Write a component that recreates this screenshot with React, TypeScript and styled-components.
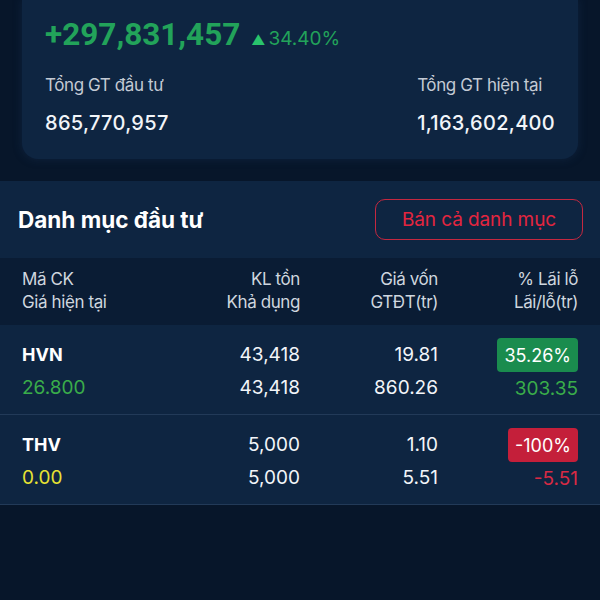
import styled, { createGlobalStyle } from 'styled-components';

const GlobalStyle = createGlobalStyle`
  html, body {
    margin: 0;
    padding: 0;
    background: #07162a;
  }
  body {
    font-family: Inter, 'Noto Sans', sans-serif;
    color: #e8eef6;
    -webkit-font-smoothing: antialiased;
  }
`;

interface Holding {
  code: string;
  price: string;
  priceTone: 'up' | 'flat';
  volume: string;
  available: string;
  cost: string;
  invested: string;
  percent: string;
  profit: string;
  tone: 'up' | 'down';
}

const holdings: Holding[] = [
  {
    code: 'HVN',
    price: '26.800',
    priceTone: 'up',
    volume: '43,418',
    available: '43,418',
    cost: '19.81',
    invested: '860.26',
    percent: '35.26%',
    profit: '303.35',
    tone: 'up',
  },
  {
    code: 'THV',
    price: '0.00',
    priceTone: 'flat',
    volume: '5,000',
    available: '5,000',
    cost: '1.10',
    invested: '5.51',
    percent: '-100%',
    profit: '-5.51',
    tone: 'down',
  },
];

export default function App() {
  return (
    <Page>
      <GlobalStyle />
      <SummaryWrap>
        <SummaryCard>
          <ProfitLine>
            <Profit>+297,831,457</Profit>
            <Change>
              <Arrow>▲</Arrow>34.40%
            </Change>
          </ProfitLine>
          <Totals>
            <TotalBlock>
              <TotalLabel>Tổng GT đầu tư</TotalLabel>
              <TotalValue>865,770,957</TotalValue>
            </TotalBlock>
            <TotalBlock>
              <TotalLabel>Tổng GT hiện tại</TotalLabel>
              <TotalValue>1,163,602,400</TotalValue>
            </TotalBlock>
          </Totals>
        </SummaryCard>
      </SummaryWrap>

      <Section>
        <SectionHeader>
          <Title>Danh mục đầu tư</Title>
          <SellAll>Bán cả danh mục</SellAll>
        </SectionHeader>

        <HeadRow>
          <HeadCell>
            <span>Mã CK</span>
            <span>Giá hiện tại</span>
          </HeadCell>
          <HeadCell $right>
            <span>KL tồn</span>
            <span>Khả dụng</span>
          </HeadCell>
          <HeadCell $right>
            <span>Giá vốn</span>
            <span>GTĐT(tr)</span>
          </HeadCell>
          <HeadCell $right>
            <span>% Lãi lỗ</span>
            <span>Lãi/lỗ(tr)</span>
          </HeadCell>
        </HeadRow>

        {holdings.map((h) => (
          <Row key={h.code}>
            <Cell>
              <Code>{h.code}</Code>
              <Value $tone={h.priceTone}>{h.price}</Value>
            </Cell>
            <Cell $right>
              <Value>{h.volume}</Value>
              <Value>{h.available}</Value>
            </Cell>
            <Cell $right>
              <Value>{h.cost}</Value>
              <Value>{h.invested}</Value>
            </Cell>
            <Cell $right>
              <Badge $tone={h.tone}>{h.percent}</Badge>
              <Value $tone={h.tone}>{h.profit}</Value>
            </Cell>
          </Row>
        ))}
      </Section>
    </Page>
  );
}

const toneColor = {
  up: '#3aad4a',
  flat: '#e6e233',
  down: '#d82a44',
};

const Page = styled.div`
  min-height: 600px;
  background: #07162a;
`;

const SummaryWrap = styled.div`
  padding: 0 22px 22px;
`;

const SummaryCard = styled.div`
  background: #0e2541;
  border-radius: 0 0 16px 16px;
  padding: 14px 23px 22px;
  box-shadow: 0 0 10px rgba(30, 60, 100, 0.35);
`;

const ProfitLine = styled.div`
  display: flex;
  align-items: baseline;
  gap: 11px;
  height: 42px;
`;

const Profit = styled.span`
  font-family: Roboto, 'Liberation Sans', sans-serif;
  font-size: 31.5px;
  font-weight: 700;
  color: #22a35a;
  line-height: 42px;
`;

const Change = styled.span`
  font-size: 19px;
  color: #22a35a;
  display: flex;
  align-items: baseline;
  gap: 3px;
`;

const Arrow = styled.span`
  font-size: 14px;
  color: #29c46c;
`;

const Totals = styled.div`
  display: flex;
  justify-content: space-between;
  margin-top: 17px;
`;

const TotalBlock = styled.div`
  display: flex;
  flex-direction: column;
  align-items: flex-start;
  gap: 12px;
`;

const TotalLabel = styled.span`
  font-size: 17px;
  color: #c3cad4;
  line-height: 24px;
  letter-spacing: -0.4px;
`;

const TotalValue = styled.span`
  font-size: 20px;
  font-weight: 500;
  color: #f2f5f9;
  line-height: 28px;
  letter-spacing: 0.3px;
`;

const Section = styled.div`
  display: flex;
  flex-direction: column;
`;

const SectionHeader = styled.div`
  display: flex;
  align-items: center;
  justify-content: space-between;
  box-sizing: border-box;
  height: 77px;
  background: #0e2541;
  padding: 0 17px 0 18px;
`;

const Title = styled.h2`
  margin: 0;
  font-size: 22.5px;
  font-weight: 700;
  color: #ffffff;
`;

const SellAll = styled.button`
  box-sizing: border-box;
  width: 208px;
  height: 41px;
  border: 1.5px solid #c42840;
  border-radius: 10px;
  background: transparent;
  color: #e3253f;
  font-family: Inter, 'Noto Sans', sans-serif;
  font-size: 19px;
  letter-spacing: -0.1px;
  cursor: pointer;
`;

const grid = `
  display: grid;
  grid-template-columns: 140px 138px 138px 140px;
  padding: 0 22px;
`;

const HeadRow = styled.div`
  ${grid}
  background: #0a1c34;
  padding-top: 10px;
  padding-bottom: 11px;
`;

const HeadCell = styled.div<{ $right?: boolean }>`
  display: flex;
  flex-direction: column;
  align-items: ${({ $right }) => ($right ? 'flex-end' : 'flex-start')};
  font-size: 17px;
  line-height: 23px;
  color: #cfd6df;
  letter-spacing: -0.4px;
`;

const Row = styled.div`
  ${grid}
  background: #0e2541;
  padding-top: 13px;
  padding-bottom: 9px;
  border-bottom: 1px solid #223a58;
`;

const Cell = styled.div<{ $right?: boolean }>`
  display: flex;
  flex-direction: column;
  align-items: ${({ $right }) => ($right ? 'flex-end' : 'flex-start')};
  & > * {
    height: 33px;
    display: flex;
    align-items: center;
  }
`;

const Code = styled.span`
  font-size: 18px;
  font-weight: 700;
  color: #ffffff;
`;

const Value = styled.span<{ $tone?: 'up' | 'flat' | 'down' }>`
  font-size: 19px;
  color: ${({ $tone }) => ($tone ? toneColor[$tone] : '#f2f5f9')};
`;

const Badge = styled.span<{ $tone: 'up' | 'down' }>`
  padding: 0 7px;
  border-radius: 4px;
  font-size: 18px;
  color: #ffffff;
  background: ${({ $tone }) => ($tone === 'up' ? '#1a8c4e' : '#c41f3a')};
  height: 34px !important;
`;
